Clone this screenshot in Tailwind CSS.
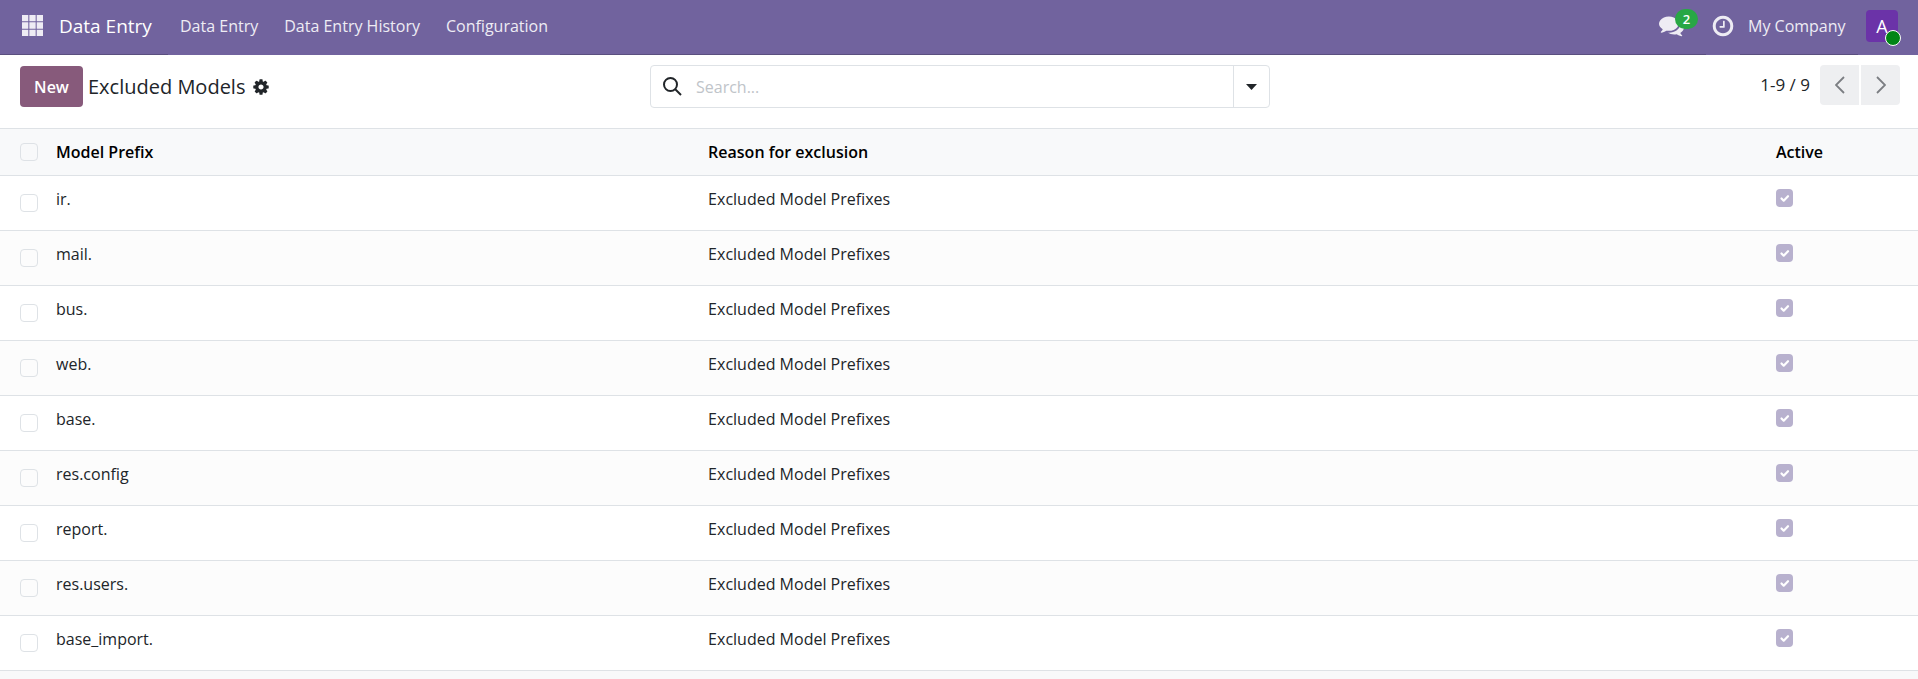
<!DOCTYPE html>
<html lang="en">

<head>
    <meta charset="UTF-8">
    <meta name="viewport" content="width=device-width, initial-scale=1.0">
    <title>Excluded Models</title>
    <script src="https://cdn.jsdelivr.net/npm/@tailwindcss/browser@4"></script>
</head>

<body class="bg-[#f8f9fa] min-h-screen font-['Open_Sans','Noto_Sans',sans-serif] text-[16px] leading-6 text-[#212529]">
    <!-- Navbar -->
    <header class="flex h-[55px] bg-[#71639e] text-[#eeecf4]">
        <div class="flex items-center w-[168px] pl-[22px] pb-[3px] border-b border-[#5a4f7f]">
            <button type="button" aria-label="Home menu" class="mr-4">
                <svg class="w-[21px] h-[21px]" viewBox="0 0 20 20" fill="currentColor">
                    <path d="M0 0h6v6H0zM7 0h6v6H7zM14 0h6v6h-6zM0 7h6v6H0zM7 7h6v6H7zM14 7h6v6h-6zM0 14h6v6H0zM7 14h6v6H7zM14 14h6v6h-6z" />
                </svg>
            </button>
            <a href="#" class="text-[19px] text-white whitespace-nowrap">Data Entry</a>
        </div>
        <nav class="flex items-center gap-[26px] px-3 pb-[3px] whitespace-nowrap">
            <a href="#">Data Entry</a>
            <a href="#">Data Entry History</a>
            <a href="#">Configuration</a>
        </nav>
        <div class="flex flex-1 items-center justify-end pr-3 pb-[3px] border-b border-[#5a4f7f]">
            <button type="button" aria-label="Messages" class="relative mr-[10px]">
                <svg class="w-[25px] h-[25px]" viewBox="0 0 1792 1792" fill="currentColor">
                    <path d="M1408 768q0 139-94 257t-256.500 186.500-353.500 68.500q-86 0-176-16-124 88-278 128-36 9-86 16h-3q-11 0-20.500-8t-11.500-21q-1-3-1-6.500t.5-6.500 2-6l2.500-5 3.500-5.500 4-5 4.500-5 4-4.500q5-6 23-25t26-29.500 22.500-29 25-38.500 20.500-44q-124-72-195-177t-71-224q0-139 94-257t256.500-186.500 353.500-68.500 353.500 68.500 256.500 186.500 94 257zm384 256q0 120-71 224.500t-195 176.500q10 24 20.500 44t25 38.500 22.500 29 26 29.500 23 25q1 1 4 4.500t4.500 5 4 5 3.500 5.500l2.500 5 2 6 .5 6.500-1 6.500q-3 14-13 22t-22 7q-50-7-86-16-154-40-278-128-90 16-176 16-271 0-472-132 58 4 88 4 161 0 309-45t264-129q125-92 192-212t67-254q0-77-23-152 129 71 204 178t75 230z" />
                </svg>
                <span class="absolute left-4 -top-1 w-[23px] h-5 rounded-full bg-[#28a745] text-white text-[13px] leading-5 font-semibold">2</span>
            </button>
        </div>
        <div class="flex items-center pb-[3px]">
            <button type="button" aria-label="Activities" class="w-[34px] flex justify-center">
                <svg class="w-6 h-6" viewBox="0 0 1792 1792" fill="currentColor">
                    <path d="M1024 544v448q0 14-9 23t-23 9h-320q-14 0-23-9t-9-23v-64q0-14 9-23t23-9h224v-352q0-14 9-23t23-9h64q14 0 23 9t9 23zm416 352q0-148-73-273t-198-198-273-73-273 73-198 198-73 273 73 273 198 198 273 73 273-73 198-198 73-273zm224 0q0 209-103 385.500t-279.500 279.500-385.500 103-385.500-103-279.500-279.500-103-385.500 103-385.500 279.500-279.500 385.500-103 385.500 103 279.500 279.500 103 385.500z" />
                </svg>
            </button>
        </div>
        <div class="flex items-center w-[118px] pl-2 pb-[3px] border-b border-[#5a4f7f] whitespace-nowrap">
            <a href="#">My Company</a>
        </div>
        <div class="flex items-center w-[60px] pl-2 pb-[3px]">
            <button type="button" class="relative w-8 h-8 rounded bg-[#6b33a8] text-white text-[18px]">A
                <span class="absolute left-[19px] top-5 w-4 h-4 rounded-full border border-white bg-[#008515]"></span>
            </button>
        </div>
    </header>

    <!-- Control panel -->
    <div class="grid grid-cols-[1fr_620px_1fr] items-start bg-white h-[73px] pt-[10px] pl-5 pr-[18px]">
        <div class="flex items-center gap-[5px] h-[43px]">
            <button type="button" class="h-[41px] w-[63px] rounded bg-[#875a7b] text-white font-semibold">New</button>
            <h1 class="text-[20px]">Excluded Models</h1>
            <button type="button" aria-label="Actions" class="ml-[2px]">
                <svg class="w-[18px] h-[18px]" viewBox="0 0 1792 1792" fill="currentColor">
                    <path d="M1152 896q0-106-75-181t-181-75-181 75-75 181 75 181 181 75 181-75 75-181zm512-109v222q0 12-8 23t-20 13l-185 28q-19 54-39 91 35 50 107 138 10 12 10 25t-9 23q-27 37-99 108t-94 71q-12 0-26-9l-138-108q-44 23-91 38-16 136-29 186-7 28-36 28h-222q-14 0-24.500-8.500t-11.500-21.500l-28-184q-49-16-90-37l-141 107q-10 9-25 9-14 0-25-11-126-114-165-168-7-10-7-23 0-12 8-23 15-21 51-66.500t54-70.500q-27-50-41-99l-183-27q-13-2-21-12.500t-8-23.500v-222q0-12 8-23t19-13l186-28q14-46 39-92-40-57-107-138-10-12-10-24 0-10 9-23 26-36 98.500-107.500t94.500-71.500q13 0 26 10l138 107q44-23 91-38 16-136 29-186 7-28 36-28h222q14 0 24.500 8.500t11.500 21.500l28 184q49 16 90 37l142-107q9-9 24-9 13 0 25 10 129 119 165 170 7 8 7 22 0 12-8 23-15 21-51 66.500t-54 70.500q26 50 41 98l183 28q13 2 21 12.500t8 23.500z" />
                </svg>
            </button>
        </div>
        <div class="flex h-[43px] border border-[#dee2e6] rounded">
            <label for="search" class="flex items-center pl-3 pr-[14px]" aria-label="Search">
                <svg class="w-[19px] h-[19px]" viewBox="0 0 19 19" fill="none" stroke="currentColor" stroke-width="2">
                    <circle cx="7.500" cy="7.500" r="6.500" />
                    <path d="M12 12l6 6" />
                </svg>
            </label>
            <input id="search" type="text" placeholder="Search..." class="flex-1 outline-none placeholder:text-[#c0c4c9]">
            <button type="button" aria-label="Toggle search panel" class="flex items-center justify-center w-9 border-l border-[#dee2e6]">
                <svg class="w-[11px] h-[6px]" viewBox="0 0 11 6" fill="currentColor">
                    <path d="M0 0h11L5.500 6z" />
                </svg>
            </button>
        </div>
        <div class="flex items-center justify-end h-10">
            <span class="mr-[10px] text-[17px]">1-9 / 9</span>
            <button type="button" aria-label="Previous" class="flex items-center justify-center w-[39px] h-10 mr-[2px] rounded-l bg-[#eeeff1] text-[#7b7e82]">
                <svg class="w-[10px] h-[18px]" viewBox="0 0 10 18" fill="none" stroke="currentColor" stroke-width="1.800">
                    <path d="M9 1L1 9l8 8" />
                </svg>
            </button>
            <button type="button" aria-label="Next" class="flex items-center justify-center w-[39px] h-10 rounded-r bg-[#eeeff1] text-[#7b7e82]">
                <svg class="w-[10px] h-[18px]" viewBox="0 0 10 18" fill="none" stroke="currentColor" stroke-width="1.800">
                    <path d="M1 1l8 8-8 8" />
                </svg>
            </button>
        </div>
    </div>

    <!-- List -->
    <table class="w-full table-fixed border-collapse border-t border-[#dee2e6] bg-white">
        <thead>
            <tr class="h-[47px] bg-[#f8f9fa] border-b border-[#dee2e6] text-left text-black">
                <th class="w-[51px] pl-5"><input type="checkbox" aria-label="Select all" class="block appearance-none w-[18px] h-[18px] border border-[#dee2e6] rounded"></th>
                <th class="w-[34%] pl-[5px] font-semibold">Model Prefix</th>
                <th class="pl-[5px] font-semibold">Reason for exclusion</th>
                <th class="w-[147px] pl-[5px] font-semibold">Active</th>
            </tr>
        </thead>
        <tbody id="model-list"></tbody>
    </table>

    <script>
        const prefixes = ['ir.', 'mail.', 'bus.', 'web.', 'base.', 'res.config', 'report.', 'res.users.', 'base_import.'];

        document.getElementById('model-list').innerHTML = prefixes.map(prefix => `
            <tr class="h-[55px] bg-white even:bg-[#fcfcfc] border-b border-[#dee2e6] align-top">
                <td class="pl-5 pt-[18px]"><input type="checkbox" aria-label="Select ${prefix}" class="block appearance-none w-[18px] h-[18px] border border-[#dee2e6] rounded"></td>
                <td class="pl-[5px] pt-[11px]">${prefix}</td>
                <td class="pl-[5px] pt-[11px]">Excluded Model Prefixes</td>
                <td class="pl-[5px] pt-[13px]">
                    <div class="relative w-[17px] h-[18px]">
                        <input type="checkbox" checked disabled aria-label="${prefix} active" class="block appearance-none w-full h-full rounded bg-[#b8b1ce]">
                        <svg class="absolute inset-0 w-[17px] h-[18px]" viewBox="0 0 17 18" fill="none" stroke="white" stroke-width="2.200" stroke-linecap="round" stroke-linejoin="round">
                            <path d="M5.500 9.500l2.200 2.200L12 7.200" />
                        </svg>
                    </div>
                </td>
            </tr>
        `).join('');
    </script>
</body>

</html>
